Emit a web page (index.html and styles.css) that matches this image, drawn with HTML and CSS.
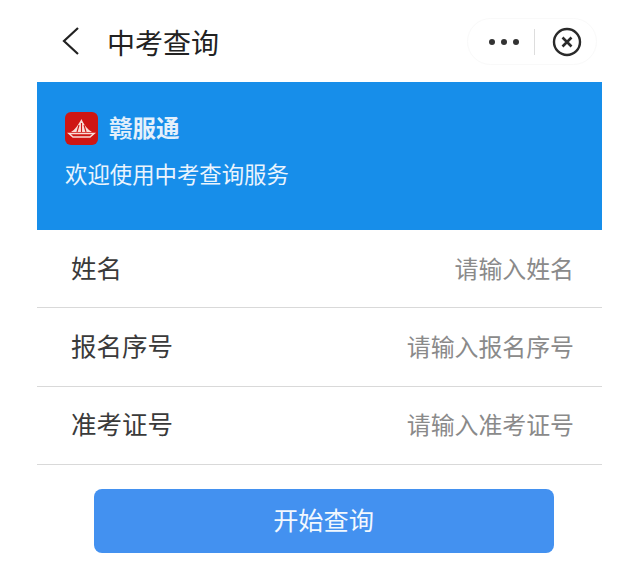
FILE: index.html
```html
<!DOCTYPE html>
<html lang="zh-CN">
<head>
    <meta charset="UTF-8">
    <meta name="viewport" content="width=device-width, initial-scale=1.0">
    <title>中考查询</title>
    <link rel="stylesheet" href="styles.css">
</head>
<body>

    <div class="page">
        <div class="nav">
            <svg class="back" width="20" height="30" viewBox="0 0 20 30">
                <path d="M18 2 L4 15 L18 28" fill="none" stroke="#222" stroke-width="2.2"/>
            </svg>
            <span class="nav-title">中考查询</span>
            <div class="capsule">
                <span class="dot"></span>
                <span class="dot"></span>
                <span class="dot"></span>
                <span class="capsule-line"></span>
                <svg class="close" width="30" height="30" viewBox="0 0 30 30">
                    <circle cx="15" cy="15" r="13" fill="none" stroke="#2a2a2a" stroke-width="2.4"/>
                    <path d="M10.5 10.5 L19.5 19.5 M19.5 10.5 L10.5 19.5" stroke="#2a2a2a" stroke-width="2.6"/>
                </svg>
            </div>
        </div>

        <div class="banner">
            <div class="brand">
                <svg class="logo" width="33" height="33" viewBox="0 0 33 33">
                    <rect width="33" height="33" rx="6" fill="#cf1512"/>
                    <path d="M6 20 C10 18 13 13 16.5 7 C19 13 23 18 27 20 Z" fill="#f9dcd6"/>
                    <path d="M12 20 L14 13 M16.5 20 L16.5 11 M21 20 L19 13" stroke="#cf1512" stroke-width="1.1"/>
                    <path d="M4 21.5 H29 L25 25 H8 Z" fill="none" stroke="#f9dcd6" stroke-width="1.5"/>
                </svg>
                <span class="brand-name">赣服通</span>
            </div>
            <p class="welcome">欢迎使用中考查询服务</p>
        </div>

        <form class="form">
            <div class="row">
                <label for="name">姓名</label>
                <input type="text" id="name" placeholder="请输入姓名">
            </div>
            <div class="row">
                <label for="regno">报名序号</label>
                <input type="text" id="regno" placeholder="请输入报名序号">
            </div>
            <div class="row">
                <label for="ticket">准考证号</label>
                <input type="text" id="ticket" placeholder="请输入准考证号">
            </div>
            <button type="button" class="submit">开始查询</button>
        </form>
    </div>

</body>
</html>
```

FILE: styles.css
```css
body {
    margin: 0;
    background-color: #fff;
    font-family: "Noto Sans CJK SC", "Liberation Sans", sans-serif;
}

.page {
    width: 565px;
    margin-left: 37px;
}

.nav {
    height: 82px;
    display: flex;
    align-items: center;
    box-sizing: border-box;
    padding-left: 23px;
}

.back {
    margin-right: 27px;
}

.nav-title {
    font-size: 28px;
    color: #222;
    margin-top: 1px;
}

.capsule {
    margin-left: auto;
    margin-right: 5px;
    width: 130px;
    height: 47px;
    margin-top: 1px;
    box-sizing: border-box;
    border: 1px solid #f9f9f9;
    border-radius: 24px;
    display: flex;
    align-items: center;
    padding-left: 21px;
}

.dot {
    width: 6px;
    height: 6px;
    border-radius: 50%;
    background-color: #333;
    margin-right: 6px;
}

.capsule-line {
    width: 1px;
    height: 26px;
    background-color: #ddd;
    margin-left: 9px;
    margin-right: 17px;
}

.banner {
    height: 148px;
    background-color: #178eea;
    box-sizing: border-box;
    padding: 30px 28px 0;
    color: #fff;
}

.brand {
    display: flex;
    align-items: center;
    height: 33px;
}

.logo {
    margin-right: 12px;
}

.brand-name {
    font-size: 23.5px;
    font-weight: 700;
    line-height: 33px;
    color: #e4f0fb;
    margin: -3px 0 0 -1px;
}

.welcome {
    margin: 11px 0 0;
    font-size: 22.4px;
    line-height: 34px;
    color: #eaf4fd;
}

.row {
    height: 78.4px;
    box-sizing: border-box;
    border-bottom: 1px solid #d9d9d9;
    display: flex;
    align-items: center;
    justify-content: space-between;
    padding: 0 28px 3px 34px;
}

.row label {
    font-size: 25.5px;
    color: #3a3a3a;
    flex: none;
    margin-bottom: 2px;
}

.row input {
    border: none;
    outline: none;
    padding: 0;
    flex: 1;
    min-width: 0;
    text-align: right;
    font-family: inherit;
    font-size: 23.9px;
    background: transparent;
}

.row input::placeholder {
    color: #8a8a8a;
    opacity: 1;
}

.submit {
    display: block;
    width: 460px;
    height: 64px;
    margin: 24px 0 0 57px;
    padding: 0 1px 4px 0;
    border: none;
    border-radius: 8px;
    background-color: #4391f0;
    color: #f2f8fe;
    font-family: inherit;
    font-size: 25.2px;
}
```
